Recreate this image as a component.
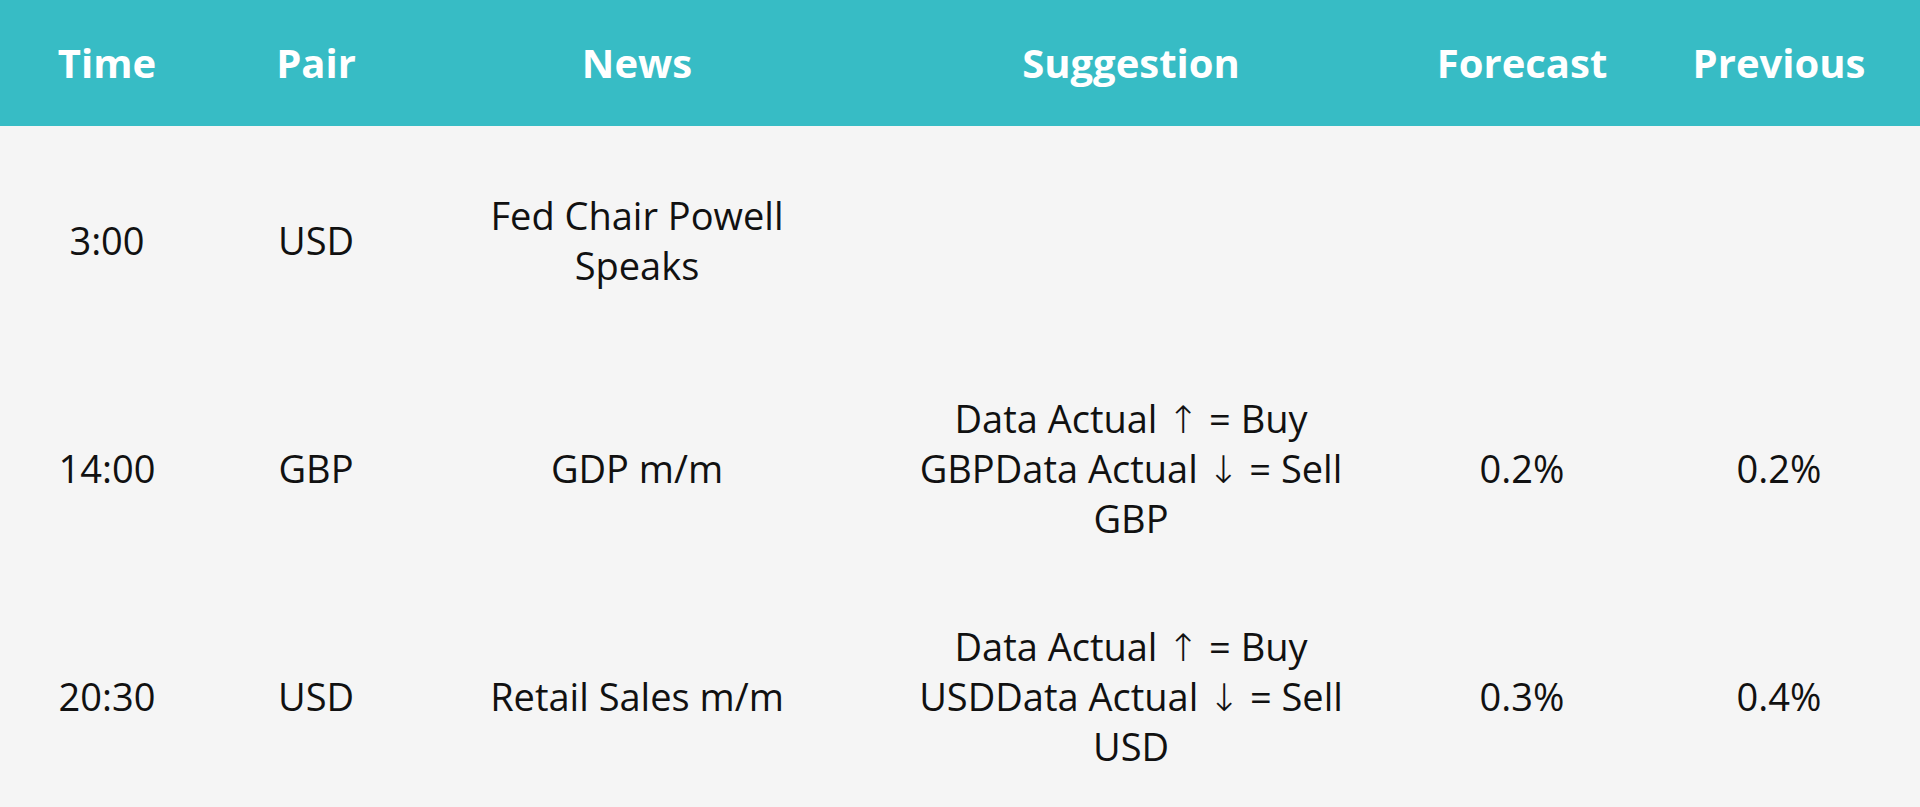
const rows = [
  { time: '3:00', pair: 'USD', news: 'Fed Chair Powell Speaks', suggestion: '', forecast: '', previous: '' },
  {
    time: '14:00',
    pair: 'GBP',
    news: 'GDP m/m',
    suggestion: 'Data Actual ↑ = Buy GBPData Actual ↓ = Sell GBP',
    forecast: '0.2%',
    previous: '0.2%',
  },
  {
    time: '20:30',
    pair: 'USD',
    news: 'Retail Sales m/m',
    suggestion: 'Data Actual ↑ = Buy USDData Actual ↓ = Sell USD',
    forecast: '0.3%',
    previous: '0.4%',
  },
];

const cols = 'grid grid-cols-[214px_204px_438px_550px_232px_282px]';

// words as separate nodes, arrows get a font with taller glyphs
function withArrows(text: string) {
  return text.split(/(\s+)/).map((part, i) =>
    part === '↑' || part === '↓' ? (
      <span key={i} className="inline-block leading-none font-['DejaVu_Sans',sans-serif] font-extralight">
        {part}
      </span>
    ) : part.trim() ? (
      <span key={i}>{part}</span>
    ) : (
      part
    )
  );
}

export default function App() {
  return (
    <div className="min-h-screen bg-[#f5f5f5] text-[#111] font-['Open_Sans',sans-serif]">
      {/* Header */}
      <div className={`${cols} h-[126px] items-center bg-[#37bcc5] text-white font-bold text-[40px]`}>
        <div className="text-center">Time</div>
        <div className="text-center">Pair</div>
        <div className="text-center">News</div>
        <div className="text-center">Suggestion</div>
        <div className="text-center">Forecast</div>
        <div className="text-center">Previous</div>
      </div>

      {/* Body */}
      {rows.map((r) => (
        <div key={r.time} className={`${cols} h-[228px] items-center text-[38px] leading-[50px] text-center`}>
          <div>{r.time}</div>
          <div>{r.pair}</div>
          <div className="px-[70px]">{r.news}</div>
          <div className="px-[50px]">{withArrows(r.suggestion)}</div>
          <div>{r.forecast}</div>
          <div>{r.previous}</div>
        </div>
      ))}
    </div>
  );
}
